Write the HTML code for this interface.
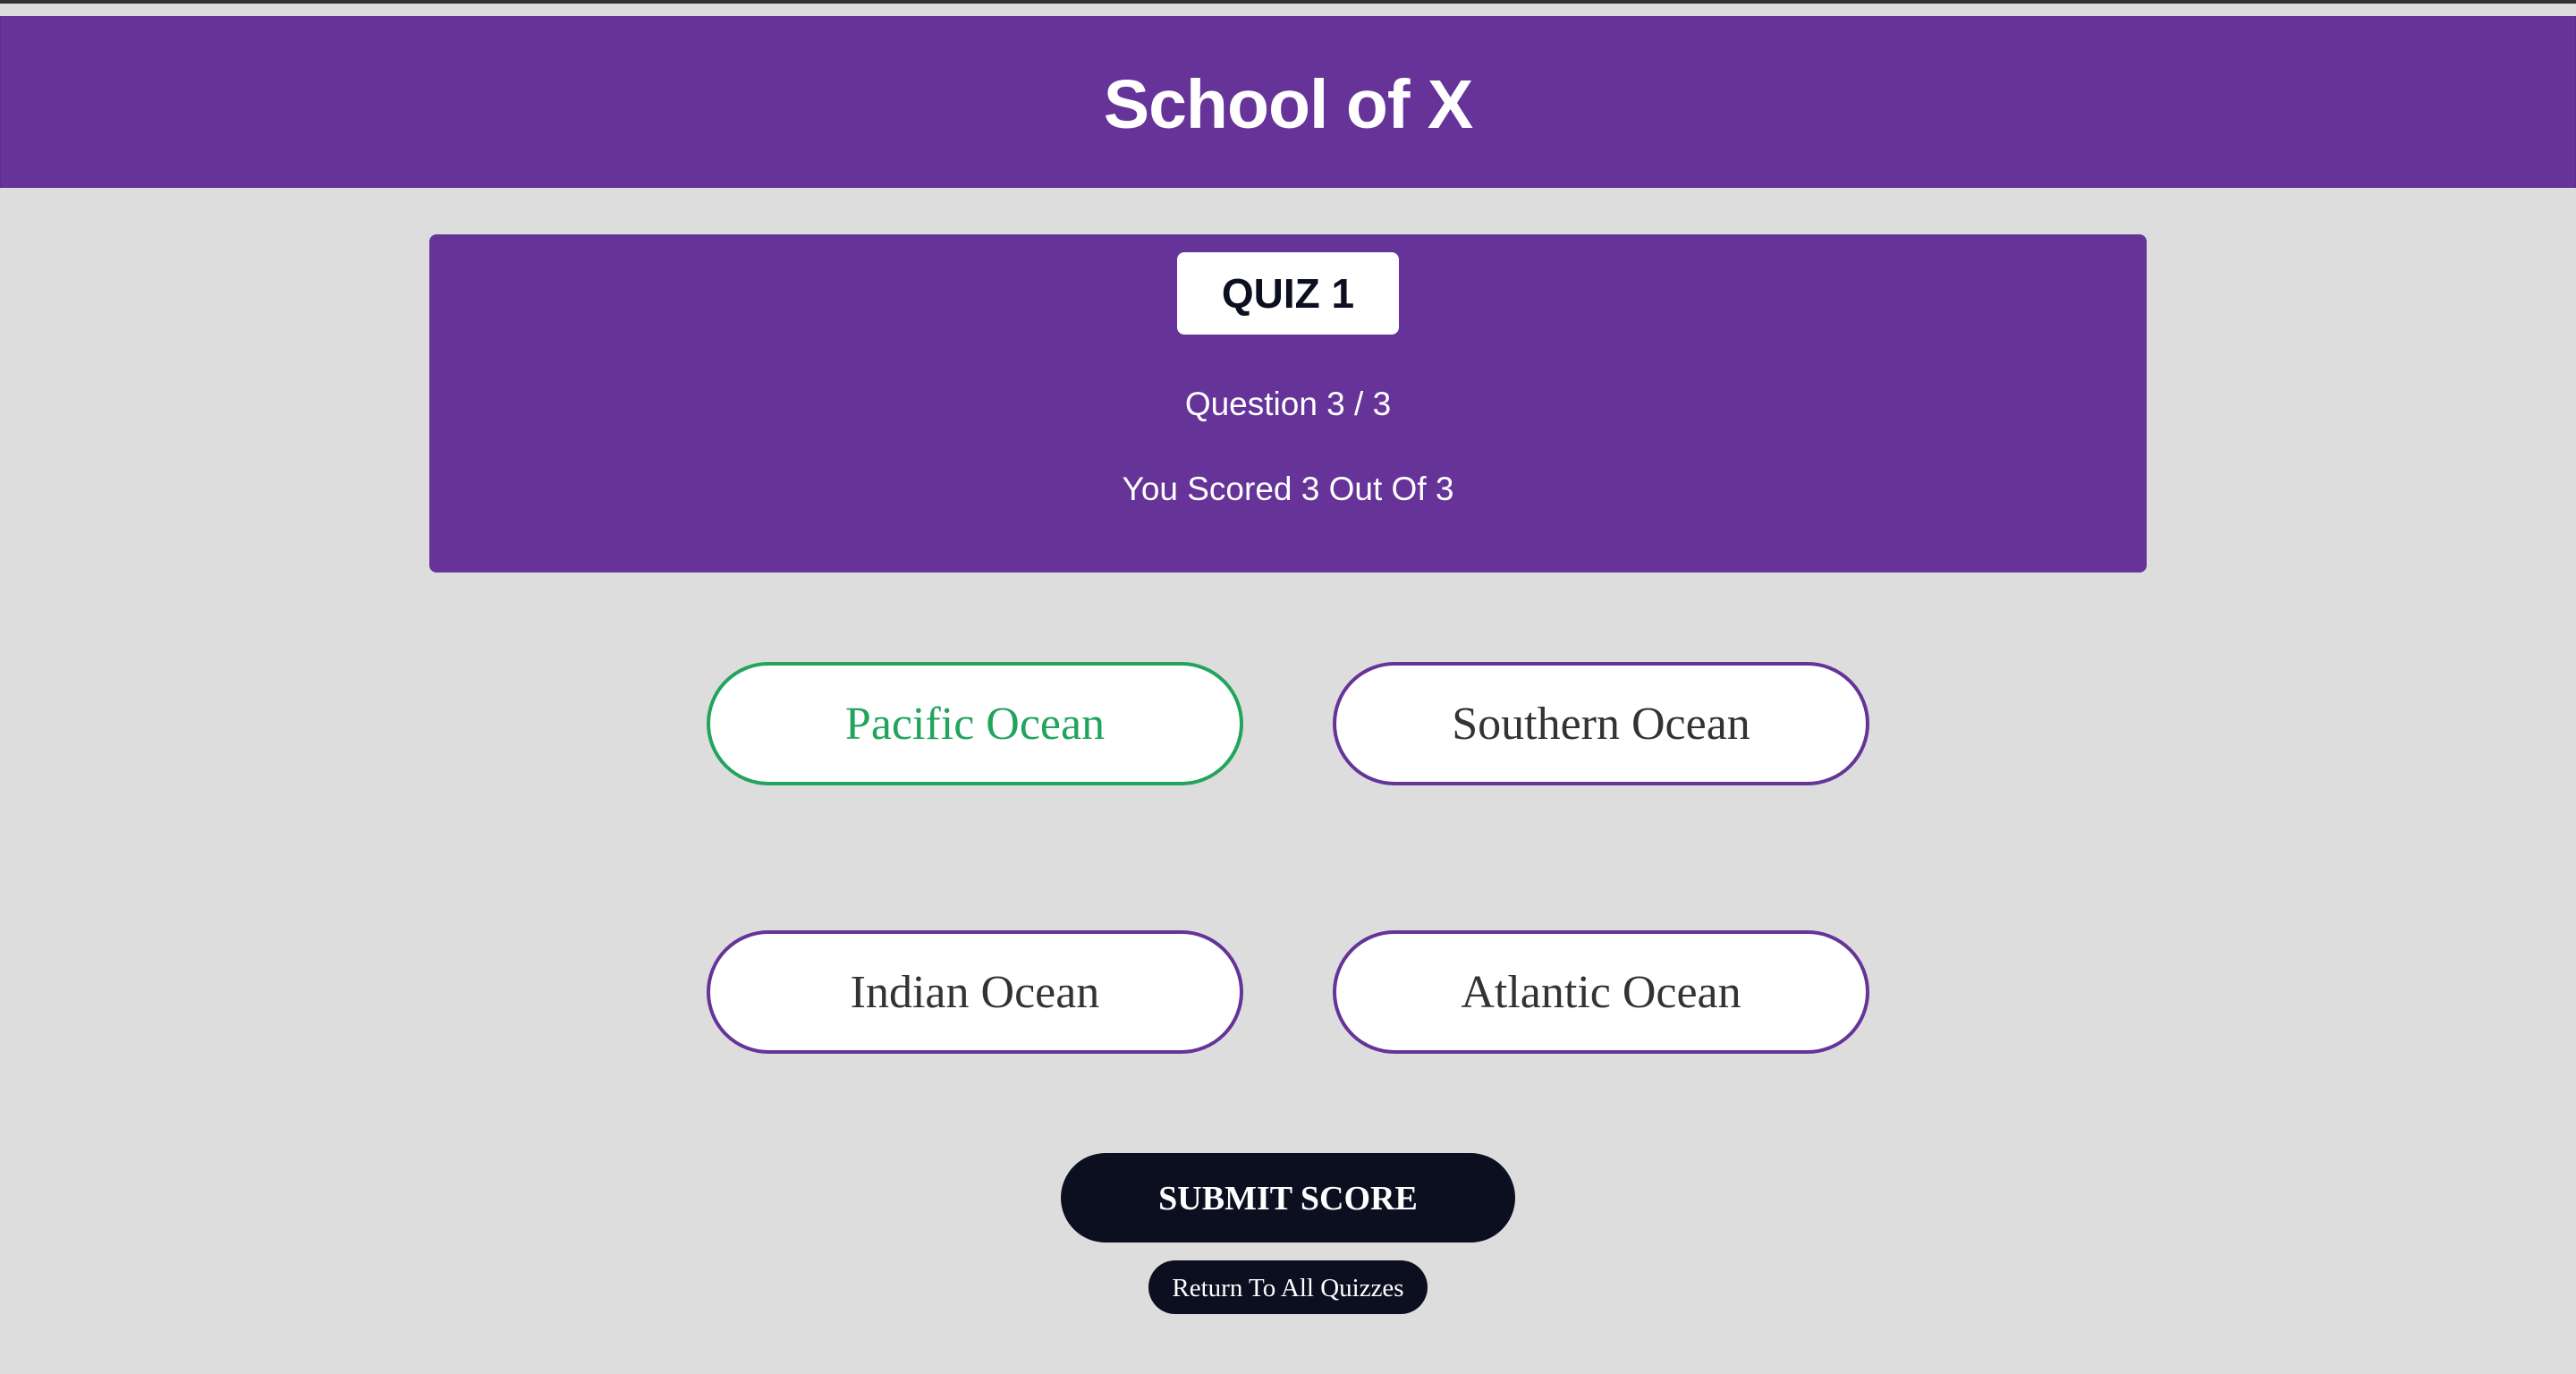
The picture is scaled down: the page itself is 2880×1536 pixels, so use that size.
<!DOCTYPE html>
<html><head><meta charset="utf-8">
<style>
*{margin:0;padding:0;box-sizing:border-box}
html,body{width:2880px;height:1536px;overflow:hidden;background:#dddddd;font-family:"Liberation Sans",sans-serif}
.topbar{position:absolute;left:0;top:0;width:2880px;height:4px;background:#333}
.header{position:absolute;left:0;top:18px;width:2880px;height:192px;background:#663399;border:1px solid #5a2d88}
.header h1{position:absolute;left:0;width:100%;top:38px;text-align:center;color:#fff;font-size:77px;line-height:120px;font-weight:bold;letter-spacing:-1px}
.card{position:absolute;left:480px;top:262px;width:1920px;height:378px;background:#663399;border-radius:8px}
.quiz{position:absolute;left:836px;top:20px;width:248px;height:92px;background:#fff;border-radius:8px;color:#0b0f1f;font-weight:bold;font-size:46px;line-height:92px;text-align:center}
.t{position:absolute;left:0;width:100%;text-align:center;color:#fff;font-size:37px;line-height:44px}
.opt{position:absolute;width:600px;height:138px;background:#fff;border:4px solid #663399;border-radius:69px;font-family:"Liberation Serif",serif;font-size:52px;color:#333;text-align:center;line-height:132px}
.dark{position:absolute;background:#0b0f1f;color:#fff;font-family:"Liberation Serif",serif;text-align:center}
</style></head><body>
<div class="topbar"></div>
<div class="header"><h1>School of X</h1></div>
<div class="card">
<div class="quiz">QUIZ 1</div>
<div class="t" style="top:168px">Question 3 / 3</div>
<div class="t" style="top:263px">You Scored 3 Out Of 3</div>
</div>
<div class="opt" style="left:790px;top:740px;border-color:#22a45d;color:#22a45d">Pacific Ocean</div>
<div class="opt" style="left:1490px;top:740px">Southern Ocean</div>
<div class="opt" style="left:790px;top:1040px">Indian Ocean</div>
<div class="opt" style="left:1490px;top:1040px">Atlantic Ocean</div>
<div class="dark" style="left:1186px;top:1289px;width:508px;height:100px;border-radius:50px;font-weight:bold;font-size:38px;line-height:102px">SUBMIT SCORE</div>
<div class="dark" style="left:1284px;top:1409px;width:312px;height:60px;border-radius:30px;font-size:29px;line-height:62px">Return To All Quizzes</div>
</body></html>
